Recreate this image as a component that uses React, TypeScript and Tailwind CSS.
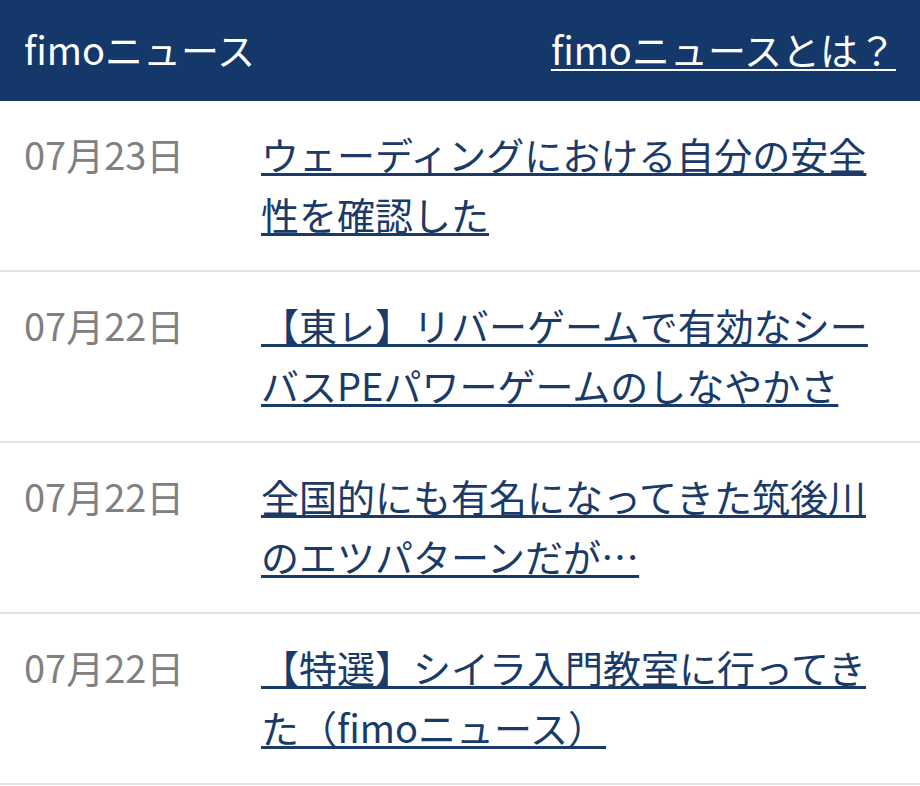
const news = [
  { date: "07月23日", title: "ウェーディングにおける自分の安全性を確認した" },
  { date: "07月22日", title: "【東レ】リバーゲームで有効なシーバスPEパワーゲームのしなやかさ" },
  { date: "07月22日", title: "全国的にも有名になってきた筑後川のエツパターンだが…" },
  { date: "07月22日", title: "【特選】シイラ入門教室に行ってきた（fimoニュース）" },
];

export default function App() {
  return (
    <div className="w-[920px] h-[786px] overflow-hidden bg-white font-['Noto_Sans_CJK_JP',sans-serif]">
      <header className="flex h-[101px] items-center justify-between bg-[#15386a] px-6 pb-1 text-[38px] text-white">
        <span>fimoニュース</span>
        <a href="#" className="underline decoration-2 underline-offset-[4px]">fimoニュースとは？</a>
      </header>
      <ul>
        {news.map((item, i) => (
          <li key={i} className="flex border-b-2 border-[#e2e2e2] pl-6 pr-6 pt-[23px] pb-[26px] text-[38px] leading-[60px]">
            <span className="w-[237px] shrink-0 text-[#808080]">{item.date}</span>
            <a href="#" className="text-[#1a3a68] underline decoration-[3px] underline-offset-[3px]">
              {item.title}
            </a>
          </li>
        ))}
      </ul>
    </div>
  );
}
